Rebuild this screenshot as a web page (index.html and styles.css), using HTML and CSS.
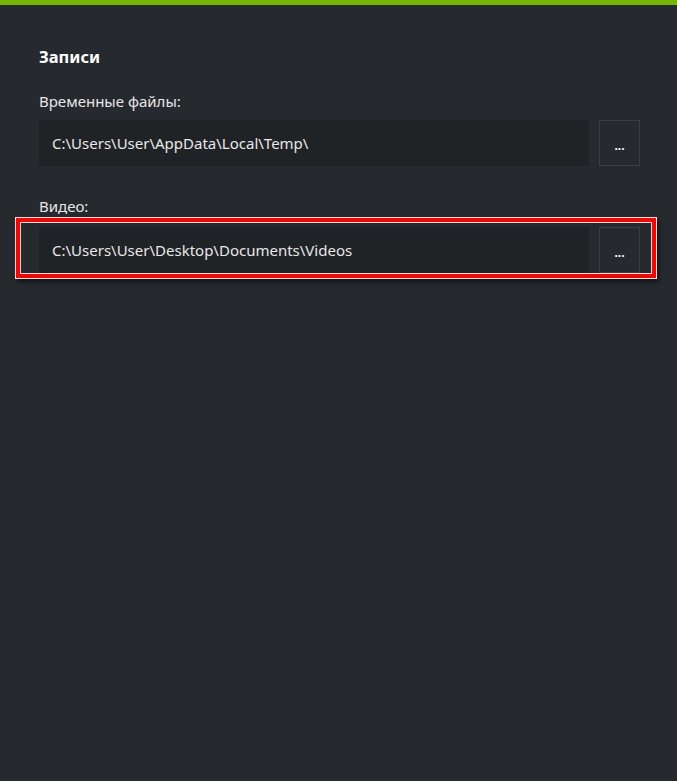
FILE: index.html
```html
<!DOCTYPE html>
<html lang="ru">
<head>
<meta charset="utf-8">
<link rel="stylesheet" href="styles.css">
</head>
<body>
<div class="topbar"></div>
<main class="panel">
  <h2 class="title">Записи</h2>
  <div class="field">
    <div class="label">Временные файлы:</div>
    <div class="row">
      <div class="path">C:\Users\User\AppData\Local\Temp\</div>
      <button class="browse">...</button>
    </div>
  </div>
  <div class="field field-video">
    <div class="label">Видео:</div>
    <div class="row">
      <div class="path">C:\Users\User\Desktop\Documents\Videos</div>
      <button class="browse">...</button>
    </div>
  </div>
  <div class="highlight"></div>
</main>
</body>
</html>
```
FILE: styles.css
```css
html, body {
  margin: 0;
  padding: 0;
  height: 100%;
}
body {
  background: #262a2e;
  color: #e8e8e8;
  font-family: "Noto Sans", "Open Sans", sans-serif;
}
.topbar {
  height: 5px;
  background: #76b900;
}
.panel {
  position: relative;
  padding: 42px 38px 0 39px;
}
.title {
  margin: 0;
  font-size: 16.5px;
  line-height: 20px;
  font-weight: 700;
  color: #ffffff;
}
.field {
  margin-top: 24px;
}
.field-video {
  margin-top: 30px;
}
.label {
  font-size: 15px;
  line-height: 20px;
  color: #e6e6e6;
  margin-bottom: 9px;
}
.field-video .label {
  margin-bottom: 11px;
}
.row {
  display: flex;
  gap: 10px;
  height: 46px;
}
.path {
  flex: 1;
  background: #202326;
  display: flex;
  align-items: center;
  padding-left: 13px;
  font-size: 15px;
  color: #e8e8e8;
}
.browse {
  width: 41px;
  height: 46px;
  box-sizing: border-box;
  background: #262a2e;
  border: 1px solid #3b3f42;
  color: #ffffff;
  font-family: inherit;
  font-size: 12px;
  font-weight: 700;
  padding: 4px 0 0;
  margin-right: -1px;
}
.highlight {
  position: absolute;
  left: 15px;
  top: 212px;
  width: 642px;
  height: 62px;
  box-sizing: border-box;
  border: 1px solid #e6e6e6;
  box-shadow: 2px 3px 4px rgba(0,0,0,0.55), inset 0 0 0 4px #ff0000, inset 0 0 0 5px #e6e6e6;
  pointer-events: none;
}
```
